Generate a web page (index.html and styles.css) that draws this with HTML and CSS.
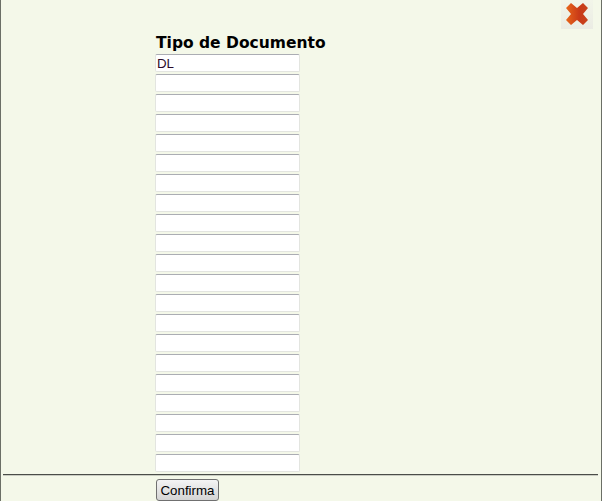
FILE: index.html
```html
<!DOCTYPE html>
<html lang="en">
<head>
	<meta charset="UTF-8">
	<title>Tipo de Documento</title>
	<link rel="stylesheet" href="styles.css">
</head>
<body>
	<div class="window">
		<div class="top">
			<button class="close" aria-label="Fechar">
				<svg width="24" height="24" viewBox="0 0 24 24">
					<defs>
						<linearGradient id="red" x1="0" y1="0" x2="1" y2="0">
							<stop offset="0" stop-color="#e8661a"/>
							<stop offset="0.6" stop-color="#c93a18"/>
							<stop offset="1" stop-color="#c8431c"/>
						</linearGradient>
					</defs>
					<path fill="url(#red)" d="M6 1 L12 6 L18 1 L23 6 L18 12 L23 18 L18 23 L12 18 L6 23 L1 18 L6 12 L1 6 Z"/>
				</svg>
			</button>
		</div>
		<div class="column">
			<h1>Tipo de Documento</h1>
			<div class="fields">
				<input type="text" value="DL">
				<input type="text">
				<input type="text">
				<input type="text">
				<input type="text">
				<input type="text">
				<input type="text">
				<input type="text">
				<input type="text">
				<input type="text">
				<input type="text">
				<input type="text">
				<input type="text">
				<input type="text">
				<input type="text">
				<input type="text">
				<input type="text">
				<input type="text">
				<input type="text">
				<input type="text">
				<input type="text">
			</div>
		</div>
		<hr>
		<div class="column">
			<button class="confirm">Confirma</button>
		</div>
	</div>
</body>
</html>
```
FILE: styles.css
```css
* {
	box-sizing: border-box;
}

html, body {
	margin: 0;
	height: 100%;
	overflow: hidden;
}

.window {
	height: 501px;
	background-color: #f4f8e9;
	border-left: 1px solid #6b6f66;
	border-right: 1px solid #6b6f66;
	font-family: "Liberation Sans", Arial, sans-serif;
}

.top {
	display: flex;
	justify-content: flex-end;
	height: 33px;
	padding-right: 8px;
}

.close {
	width: 32px;
	height: 29px;
	padding: 0 0 2px;
	border: 0;
	display: flex;
	align-items: center;
	justify-content: center;
	background: linear-gradient(#f2f5e9, #ebece4);
}

.column {
	padding-left: 154px;
}

h1 {
	margin: 0 0 0 1px;
	height: 21px;
	line-height: 20px;
	font-family: "DejaVu Sans", Verdana, sans-serif;
	font-size: 15.5px;
	font-weight: bold;
	color: #000;
	white-space: nowrap;
}

.fields {
	display: flex;
	flex-direction: column;
	gap: 2px;
	width: 145px;
}

.fields input {
	width: 145px;
	height: 18px;
	padding: 0 1px;
	background-color: #fff;
	border: 1px solid #e3e5e0;
	border-top: 1px solid #abadb3;
	border-radius: 2px;
	font-family: "Liberation Sans", Arial, sans-serif;
	font-size: 13.3px;
	color: #2a0a2a;
	outline: none;
}

hr {
	margin: 2px 3px 3px 2px;
	height: 2px;
	border: 0;
	border-top: 1px solid #4a4d48;
	border-bottom: 1px solid #c9ccc2;
}

.confirm {
	margin-left: 1px;
	width: 63px;
	height: 22px;
	padding: 0;
	background: linear-gradient(#f4f4f4, #d4d4d4);
	border: 1px solid #707070;
	border-radius: 3px;
	font-family: "Liberation Sans", Arial, sans-serif;
	font-size: 13.3px;
	color: #000;
}
```
